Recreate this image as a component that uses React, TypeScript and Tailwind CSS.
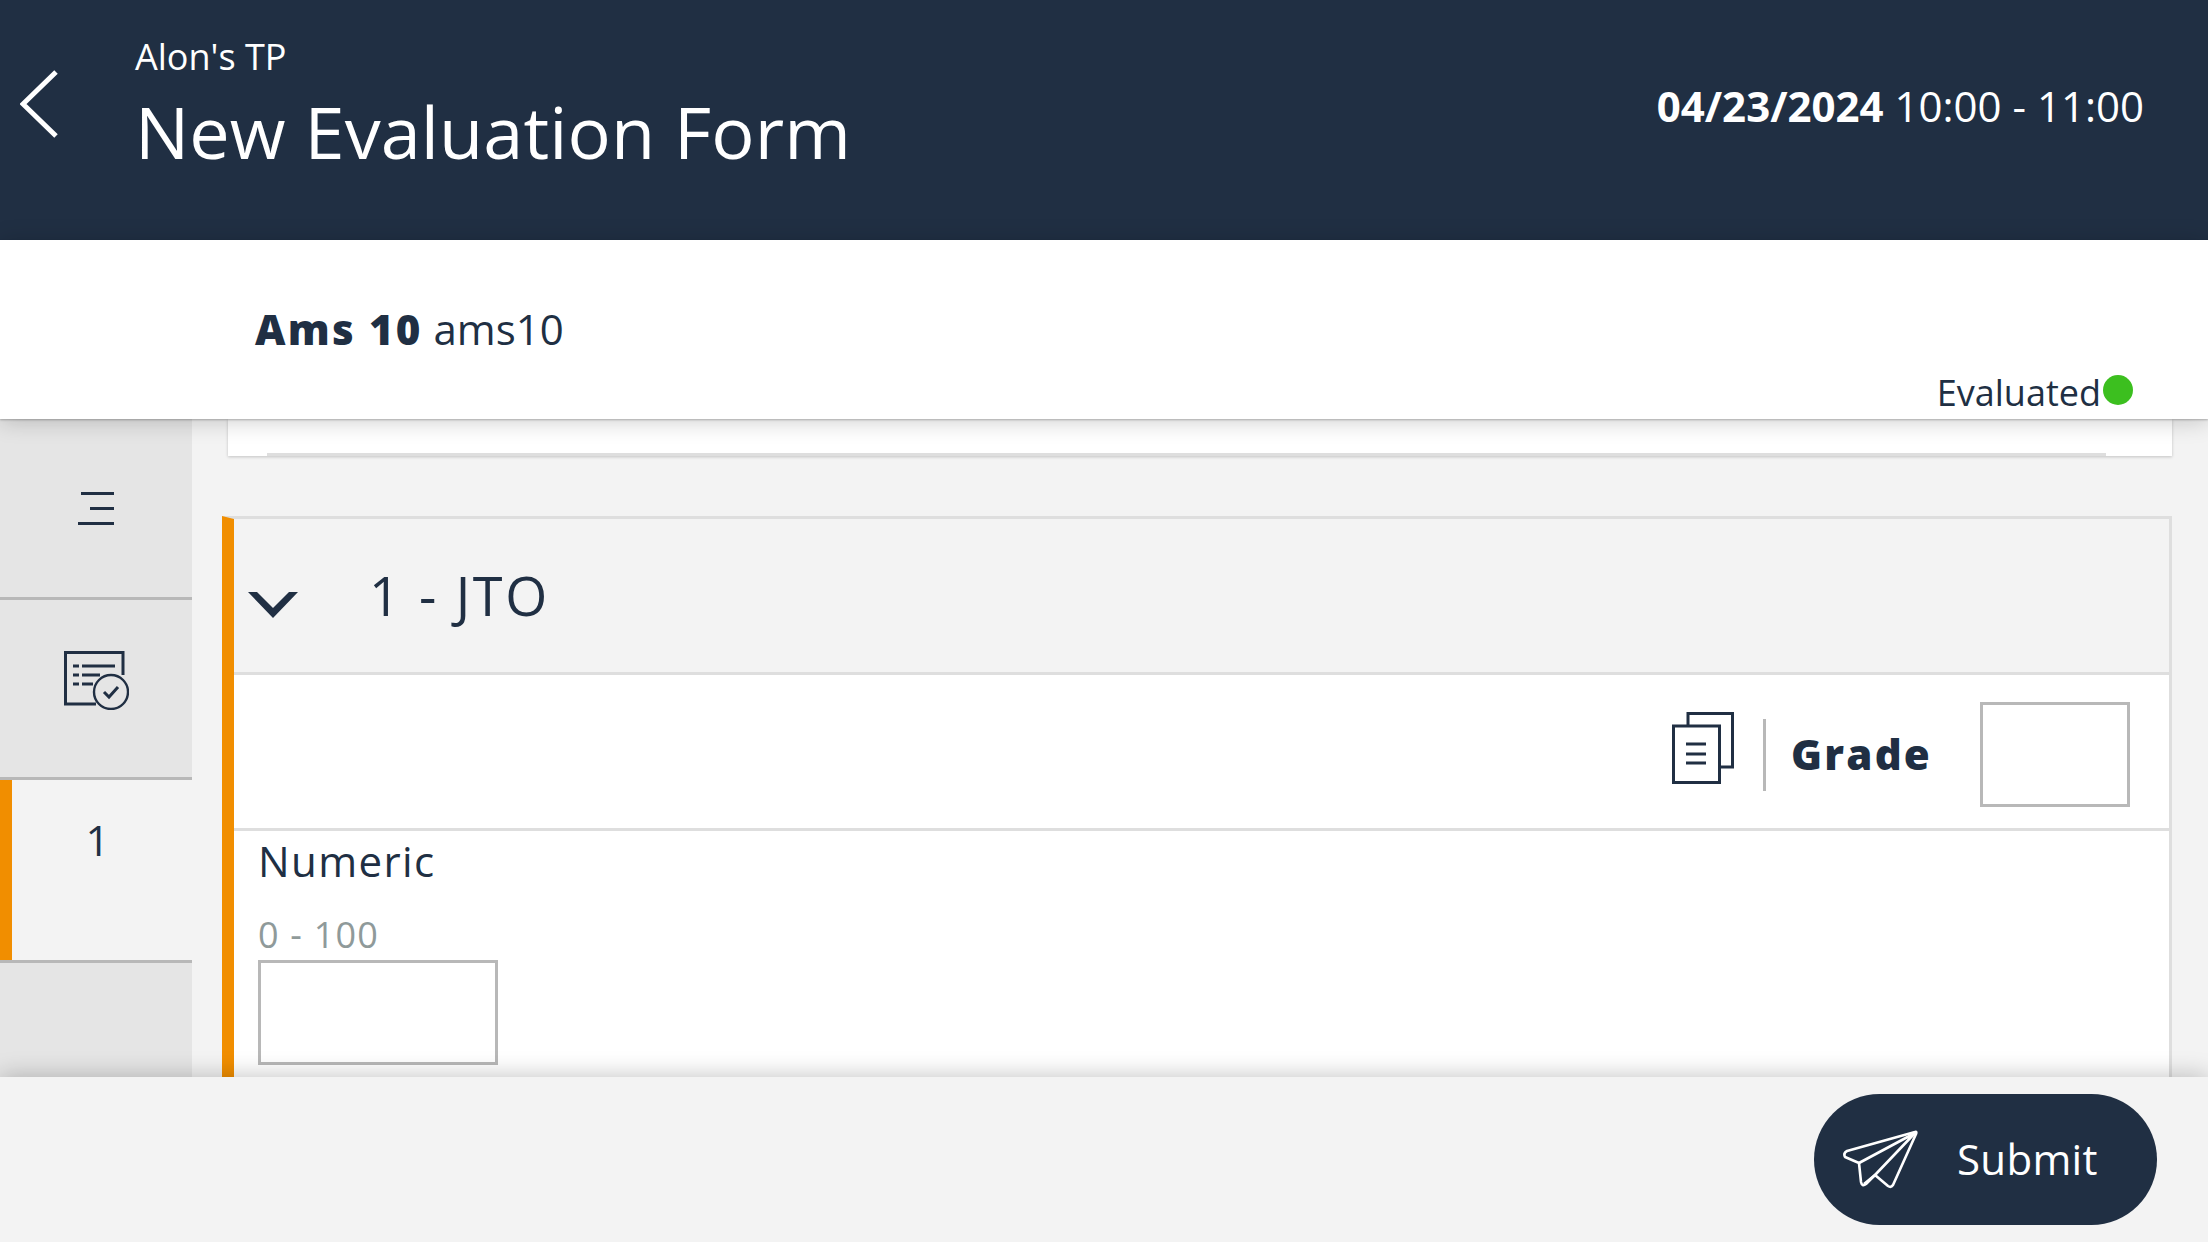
const navy = "#202f43";

function BackIcon() {
  return (
    <svg width="38" height="68" viewBox="0 0 38 68" fill="none" stroke="#fff" strokeWidth="5">
      <path d="M36 2 L3 34 L36 66" />
    </svg>
  );
}

function MenuIcon() {
  return (
    <svg width="36" height="33" viewBox="0 0 36 33" fill={navy}>
      <rect x="3" y="0" width="33" height="3" />
      <rect x="12" y="15" width="24" height="3" />
      <rect x="0" y="30" width="36" height="3" />
    </svg>
  );
}

function FormCheckIcon() {
  return (
    <svg width="65" height="59" viewBox="0 0 65 59" fill="none" stroke={navy}>
      <path d="M32 53 H1.5 V1.5 H59 V24" strokeWidth="3" />
      <circle cx="47" cy="41" r="17" strokeWidth="2.4" />
      <path d="M40 41 L45 46 L54 36" strokeWidth="3" />
      <path d="M9 15 H15 M18 15 H51 M9 24 H15 M18 24 H36 M9 33 H15 M18 33 H29" strokeWidth="2.8" />
    </svg>
  );
}

function ChevronIcon() {
  return (
    <svg width="50" height="26" viewBox="0 0 50 26" fill={navy}>
      <path d="M0 0 H9 L25 16 L41 0 H50 L25 26 Z" />
    </svg>
  );
}

function PagesIcon() {
  return (
    <svg width="62" height="72" viewBox="0 0 62 72" fill="none" stroke={navy} strokeWidth="3">
      <path d="M16 13 V1.5 H60.5 V55 H49" />
      <rect x="1.5" y="14" width="46" height="56.5" />
      <path d="M14 32 H34 M14 42 H34 M14 51 H34" />
    </svg>
  );
}

function PlaneIcon() {
  return (
    <svg width="75" height="59" viewBox="0 0 75 59" fill="none" stroke="#fff" strokeWidth="2.6" strokeLinejoin="round">
      <path d="M72 2 L4 21 Q0 23 2 27 L16 33 L18 52 Q19 57 23 54 L32 45 L45 56 Q48 58 50 55 L73 4 Q74 1 72 2 Z" />
      <path d="M16 33 L72 3 M21 54 L32 45 L72 3" />
    </svg>
  );
}

export default function App() {
  return (
    <div
      className="flex h-[1242px] w-[2208px] flex-col overflow-hidden bg-[#f3f3f3] text-[#202f43]"
      style={{ fontFamily: '"Open Sans", sans-serif' }}
    >
      <header className="flex h-[240px] shrink-0 items-start justify-between bg-[#202f43] text-white">
        <div className="flex">
          <div className="pl-[20px] pt-[70px]">
            <BackIcon />
          </div>
          <div className="pl-[77px] pt-[32px]">
            <div className="text-[36px] leading-[49px]">Alon's TP</div>
            <div className="mt-[2px] text-[72px] leading-[97px] tracking-[0.1px]">New Evaluation Form</div>
          </div>
        </div>
        <div className="pr-[64px] pt-[77px] text-[42px] leading-[58px]">
          <span className="font-bold">04/23/2024</span> 10:00 - 11:00
        </div>
      </header>

      <div className="relative z-10 flex h-[179px] shrink-0 flex-col bg-white shadow-[0_1px_2px_rgba(0,0,0,0.25),0_2px_22px_rgba(0,0,0,0.2)]">
        <div className="pl-[255px] pt-[60px] text-[42px] leading-[58px]">
          <span className="font-extrabold tracking-[2.2px]">Ams 10</span> ams10
        </div>
        <div className="flex items-center justify-end pr-[75px] pt-[10px]">
          <span className="text-[36px] leading-[49px]">Evaluated</span>
          <span className="ml-[2px] -mt-[6px] h-[30px] w-[30px] rounded-full bg-[#3cbf1f]" />
        </div>
      </div>

      <div className="flex min-h-0 flex-1">
        <aside className="flex w-[192px] shrink-0 flex-col bg-[#e5e5e5]">
          <div className="flex h-[181px] items-center justify-center border-b-[3px] border-[#b8b8b8]">
            <MenuIcon />
          </div>
          <div className="flex h-[180px] items-center justify-center border-b-[3px] border-[#b8b8b8] pb-[16px]">
            <FormCheckIcon />
          </div>
          <div className="h-[183px] border-b-[3px] border-[#b8b8b8]">
            <div className="h-full border-l-[12px] border-[#f18e00] bg-[#f3f3f3] pr-[9px] pt-[31px] text-center text-[42px] leading-[58px]">
              1
            </div>
          </div>
        </aside>

        <main className="flex min-w-0 flex-1 flex-col overflow-hidden pl-[30px] pr-[36px]">
          <div className="ml-[6px] flex h-[37px] shrink-0 justify-end bg-white pl-[39px] pr-[66px] shadow-[0_1px_3px_rgba(0,0,0,0.2)]">
            <div className="mt-auto h-[3px] w-full bg-[#dedede]" />
          </div>

          <section className="mt-[60px] flex-1 border-l-[12px] border-r-[3px] border-t-[3px] border-l-[#f18e00] border-r-[#dedede] border-t-[#dedede] bg-white">
            <div className="flex h-[156px] items-center border-b-[3px] border-[#dedede] bg-[#f3f3f3]">
              <div className="ml-[14px] mt-[18px]">
                <ChevronIcon />
              </div>
              <div className="ml-[71px] -mt-[2px] text-[54px] leading-[74px] tracking-[2.6px]">1 - JTO</div>
            </div>

            <div className="flex h-[156px] items-center justify-end border-b-[3px] border-[#dedede] pr-[39px]">
              <div className="mr-[1px] -mt-[8px]">
                <PagesIcon />
              </div>
              <div className="ml-[28px] mt-[6px] h-[72px] w-[3px] bg-[#b8b8b8]" />
              <div className="ml-[25px] mr-[48px] mt-[5px] text-[42px] leading-[58px] font-extrabold tracking-[2.2px]">Grade</div>
              <div className="mt-[6px] h-[105px] w-[150px] border-[3px] border-[#b8b8b8] bg-white" />
            </div>

            <div className="pl-[24px] pt-[1px]">
              <div className="text-[42px] leading-[58px] tracking-[1.4px]">Numeric</div>
              <div className="mt-[20px] text-[36px] leading-[49px] tracking-[1.2px] text-[#8f9a9a]">0 - 100</div>
              <div className="mt-[1px] h-[105px] w-[240px] border-[3px] border-[#b8b8b8] bg-white" />
            </div>
          </section>
        </main>
      </div>

      <footer className="relative z-10 flex h-[165px] shrink-0 justify-end bg-[#f3f3f3] pr-[51px] pt-[17px] shadow-[0_-2px_22px_rgba(0,0,0,0.22)]">
        <button className="flex h-[131px] w-[343px] items-center rounded-full bg-[#202f43] pl-[29px] text-white">
          <PlaneIcon />
          <span className="ml-[39px] -mt-[2px] text-[42px] leading-[58px] tracking-[0.3px]">Submit</span>
        </button>
      </footer>
    </div>
  );
}
